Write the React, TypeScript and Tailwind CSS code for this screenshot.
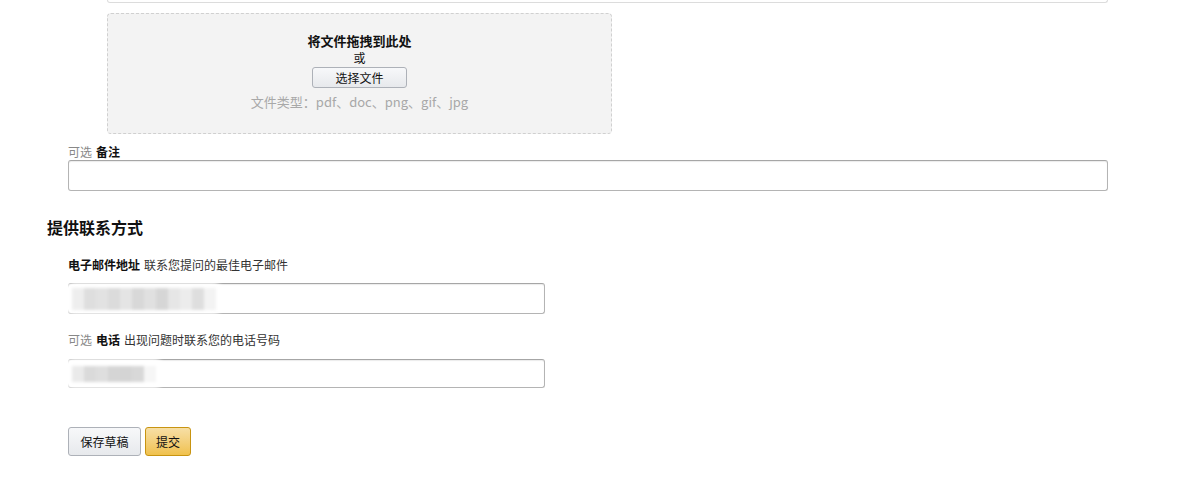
import React from "react";

const font = { fontFamily: '"Noto Sans CJK SC", "Liberation Sans", sans-serif' };

const fieldCls =
  "block rounded-[3px] border border-[#b4b4b4] border-t-[#a6a6a6] bg-white shadow-[inset_0_1px_1px_rgba(0,0,0,0.08)]";

// blurred stand-in for the redacted value in a field
function Redacted({ cells, h }: { cells: string[]; h: string }) {
  return (
    <div className="pointer-events-none absolute left-[-8px] top-0 flex h-full items-center rounded-full bg-white px-[12px] blur-[1.5px]">
      {cells.map((c, i) => (
        <div key={i} className={`${h} w-[12px] ${c}`} />
      ))}
    </div>
  );
}

export default function App() {
  return (
    <div className="min-h-[497px] bg-white text-[12px] text-[#111]" style={font}>
      {/* tail of the field above */}
      <div className="ml-[107px] h-[3px] w-[1001px] rounded-b-[3px] border-x border-b border-[#dcdcdc]" />

      {/* drop zone */}
      <div className="ml-[107px] mt-[10px] flex h-[121px] w-[505px] flex-col items-center rounded-[4px] border border-dashed border-[#d0d0d0] bg-[#f3f3f3] pt-[18px]">
        <div className="flex h-[17px] items-center text-[13px] font-bold">将文件拖拽到此处</div>
        <div className="flex h-[17px] items-center text-[12px]">或</div>
        <button className="mt-[1px] flex h-[21px] w-[95px] items-center justify-center rounded-[3px] border border-[#adb1b8] bg-gradient-to-b from-[#f7f8fa] to-[#e7e9ec] text-[12px]">
          选择文件
        </button>
        <div className="mt-[5px] flex h-[18px] items-center text-[13px] text-[#a8a8a8]">
          文件类型：pdf、doc、png、gif、jpg
        </div>
      </div>

      {/* notes */}
      <div className="ml-[68px] mt-[10px]">
        <div className="flex h-[16px] items-center gap-[4px]">
          <span className="text-[#888]">可选</span>
          <span className="font-bold">备注</span>
        </div>
        <input className={`h-[31px] w-[1040px] ${fieldCls}`} />
      </div>

      {/* contact */}
      <h2 className="ml-[47px] mt-[26px] flex h-[20px] items-center text-[16px] font-bold">提供联系方式</h2>

      <div className="ml-[68px] mt-[20px]">
        <div className="flex h-[16px] items-center gap-[4px]">
          <span className="font-bold">电子邮件地址</span>
          <span className="text-[#333]">联系您提问的最佳电子邮件</span>
        </div>
        <div className="relative mt-[10px] h-[31px] w-[477px]">
          <input className={`h-[31px] w-full ${fieldCls}`} />
          <Redacted
            h="h-[22px]"
            cells={[
              "bg-[#eeeeee]",
              "bg-[#dedede]",
              "bg-[#e2e2e2]",
              "bg-[#dbdbdb]",
              "bg-[#e4e4e4]",
              "bg-[#d8d8d8]",
              "bg-[#e0e0e0]",
              "bg-[#d6d6d6]",
              "bg-[#e6e6e6]",
              "bg-[#ececec]",
              "bg-[#dedede]",
              "bg-[#f3f3f3]",
            ]}
          />
        </div>
      </div>

      <div className="ml-[68px] mt-[18px]">
        <div className="flex h-[16px] items-center gap-[4px]">
          <span className="text-[#888]">可选</span>
          <span className="font-bold">电话</span>
          <span className="text-[#333]">出现问题时联系您的电话号码</span>
        </div>
        <div className="relative mt-[11px] h-[29px] w-[477px]">
          <input className={`h-[29px] w-full ${fieldCls}`} />
          <Redacted
            h="h-[16px]"
            cells={[
              "bg-[#eaeaea]",
              "bg-[#dadada]",
              "bg-[#dedede]",
              "bg-[#d5d5d5]",
              "bg-[#d4d4d4]",
              "bg-[#d8d8d8]",
              "bg-[#f6f6f6]",
            ]}
          />
        </div>
      </div>

      {/* actions */}
      <div className="ml-[68px] mt-[39px] flex gap-[4px]">
        <button className="h-[29px] w-[73px] rounded-[3px] border border-[#adb1b8] bg-gradient-to-b from-[#f7f8fa] to-[#e7e9ec] text-[12px] text-[#111]">
          保存草稿
        </button>
        <button className="h-[29px] w-[46px] rounded-[3px] border border-[#c89411] bg-gradient-to-b from-[#f7dfa5] to-[#f0c14b] text-[12px] text-[#111]">
          提交
        </button>
      </div>
    </div>
  );
}
